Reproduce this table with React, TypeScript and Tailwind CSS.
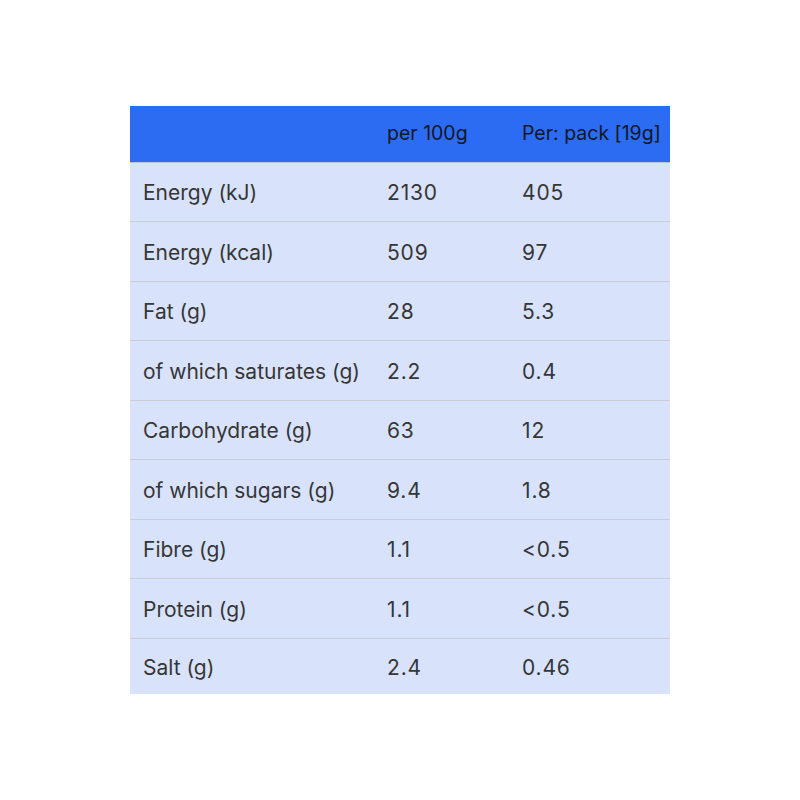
import React from "react";

const rows: [string, string, string][] = [
  ["Energy (kJ)", "2130", "405"],
  ["Energy (kcal)", "509", "97"],
  ["Fat (g)", "28", "5.3"],
  ["of which saturates (g)", "2.2", "0.4"],
  ["Carbohydrate (g)", "63", "12"],
  ["of which sugars (g)", "9.4", "1.8"],
  ["Fibre (g)", "1.1", "<0.5"],
  ["Protein (g)", "1.1", "<0.5"],
  ["Salt (g)", "2.4", "0.46"],
];

export default function App() {
  return (
    <div
      className="flex h-[800px] w-[800px] items-center justify-center bg-white"
      style={{ fontFamily: "Inter, 'Noto Sans', sans-serif" }}
    >
      <table className="w-[540px] border-collapse text-left text-[21px]">
        <thead>
          <tr className="h-[56px] bg-[#2c6cf3] text-[#111827] text-[19.5px] border-b border-[#b9c4dd]">
            <th className="w-[245px] pl-[13px] font-normal"></th>
            <th className="w-[135px] pl-[12px] font-normal">per 100g</th>
            <th className="pl-[12px] font-normal">Per: pack [19g]</th>
          </tr>
        </thead>
        <tbody className="bg-[#d8e3fb] text-[#363636]">
          {rows.map((r, i) => (
            <tr
              key={i}
              className={
                i < rows.length - 1
                  ? "h-[59.5px] border-b border-[#c9cdd6]"
                  : "h-[56px]"
              }
            >
              <td className="pl-[13px] pt-[2px]">{r[0]}</td>
              <td className="pl-[12px] pt-[2px] tracking-[0.04em]">{r[1]}</td>
              <td className="pl-[12px] pt-[2px] tracking-[0.04em]">{r[2]}</td>
            </tr>
          ))}
        </tbody>
      </table>
    </div>
  );
}
